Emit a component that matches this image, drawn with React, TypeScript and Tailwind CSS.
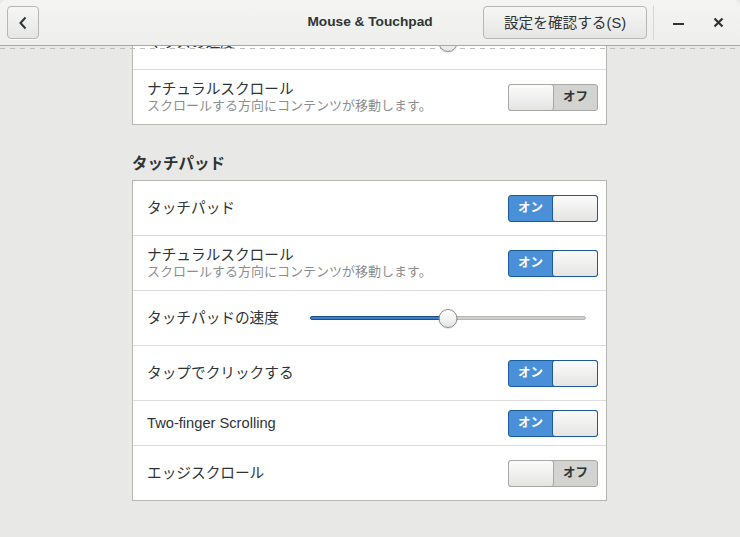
import type { ReactNode } from "react";

const font = "font-['Liberation_Sans','Noto_Sans_CJK_JP',sans-serif]";

function Switch({ on }: { on: boolean }) {
  if (on) {
    return (
      <div className="flex h-[27px] w-[90px] shrink-0 rounded-[3px] border border-[#1d5a99] bg-[#4a90d9]">
        <div className="flex flex-1 items-center justify-center text-[12.5px] font-bold text-white">
          オン
        </div>
        <div className="-my-px -mr-px w-[46px] rounded-[3px] border border-[#1d5a99] bg-gradient-to-b from-[#fbfbfb] to-[#e4e4e3]" />
      </div>
    );
  }
  return (
    <div className="flex h-[27px] w-[90px] shrink-0 rounded-[3px] border border-[#a8a8a5] bg-[#d3d3d1]">
      <div className="-my-px -ml-px w-[46px] rounded-[3px] border border-[#a8a8a5] bg-gradient-to-b from-[#fbfbfb] to-[#e4e4e3]" />
      <div className="flex flex-1 items-center justify-center text-[12.5px] font-bold text-[#2e3436]">
        オフ
      </div>
    </div>
  );
}

function Slider({ value }: { value: number }) {
  return (
    <div className="relative mr-[12px] ml-auto flex h-[20px] w-[276px] items-center">
      <div className="h-[4px] w-full rounded-full border border-[#b5b5b2] bg-[#cfcfcd]" />
      <div
        className="absolute top-[8px] left-0 h-[4px] rounded-full border border-[#1c5187] bg-[#3b7fc8]"
        style={{ width: `${value}%` }}
      />
      <div
        className="absolute top-[0.5px] h-[19px] w-[19px] -translate-x-1/2 rounded-full border border-[#8e8e8b] bg-gradient-to-b from-[#ffffff] to-[#e6e6e4] shadow-[0_1px_1px_rgba(0,0,0,0.12)]"
        style={{ left: `${value}%` }}
      />
    </div>
  );
}

function Row({
  title,
  sub,
  tall = true,
  last = false,
  children,
}: {
  title: string;
  sub?: string;
  tall?: boolean;
  last?: boolean;
  children: ReactNode;
}) {
  // heights include the 1px separator at the bottom
  const h = last ? "h-[54px]" : tall ? "h-[55px] border-b border-[#dcdcda]" : "h-[45px] border-b border-[#dcdcda]";
  return (
    <div className={`flex items-center pr-[8px] pl-[14px] ${h}`}>
      <div className="flex flex-col">
        <span className="text-[14.67px] leading-[18px] text-[#2e3436]">{title}</span>
        {sub && <span className="text-[13px] leading-[16px] text-[#8b8e8f]">{sub}</span>}
      </div>
      <div className="ml-auto flex flex-1 justify-end">{children}</div>
    </div>
  );
}

const naturalSub = "スクロールする方向にコンテンツが移動します。";

export default function App() {
  return (
    <div className={`${font} flex h-[537px] w-[740px] flex-col overflow-hidden bg-[#e8e8e7]`}>
      <header className="grid h-[46px] shrink-0 grid-cols-[1fr_auto_1fr] items-center rounded-t-[6px] border-b border-[#a8a8a5] bg-gradient-to-b from-[#f4f4f3] to-[#eeeeed]">
        <div className="pl-[7px]">
          <button className="flex h-[33px] w-[32px] items-center justify-center rounded-[4px] border border-[#b6b6b3] bg-gradient-to-b from-[#f6f6f6] to-[#e6e6e5] shadow-[0_1px_0_rgba(255,255,255,0.8)]">
            <svg width="10" height="14" viewBox="0 0 10 14" fill="none">
              <path d="M7.5 1.5L2.5 7L7.5 12.5" stroke="#2e3436" strokeWidth="2" />
            </svg>
          </button>
        </div>
        <div className="text-[13.7px] font-bold text-[#2e3436]">Mouse &amp; Touchpad</div>
        <div className="flex items-center justify-end pr-[4px]">
          <button className="flex h-[33px] w-[164px] items-center justify-center rounded-[4px] border border-[#b6b6b3] bg-gradient-to-b from-[#f6f6f6] to-[#e6e6e5] text-[14.67px] text-[#2e3436]">
            設定を確認する(S)
          </button>
          <div className="ml-[6px] h-[34px] w-px bg-[#d6d6d4]" />
          <button className="ml-[6px] flex h-[33px] w-[36px] items-center justify-center">
            <div className="mt-[3px] h-[2px] w-[11px] bg-[#2e3436]" />
          </button>
          <button className="ml-[4px] flex h-[33px] w-[36px] items-center justify-center">
            <svg width="11" height="11" viewBox="0 0 11 11">
              <path d="M1.5 1.5L9.5 9.5M9.5 1.5L1.5 9.5" stroke="#2e3436" strokeWidth="2.2" />
            </svg>
          </button>
        </div>
      </header>

      <main className="relative flex-1 overflow-hidden">
        <div className="pointer-events-none absolute top-[2px] right-0 left-0 h-px bg-[repeating-linear-gradient(90deg,#bdbdba_0_5px,transparent_5px_10px)]" />
        <div className="mt-[-32px] ml-[132px] w-[475px]">
          <div className="border border-[#b6b6b3] bg-white">
            <Row title="マウスの速度">
              <Slider value={50} />
            </Row>
            <Row title="ナチュラルスクロール" sub={naturalSub} last>
              <Switch on={false} />
            </Row>
          </div>

          <h2 className="mt-[29px] mb-[6px] h-[20px] text-[15.5px] leading-[20px] font-bold text-[#2e3436]">
            タッチパッド
          </h2>

          <div className="border border-[#b6b6b3] bg-white">
            <Row title="タッチパッド">
              <Switch on />
            </Row>
            <Row title="ナチュラルスクロール" sub={naturalSub}>
              <Switch on />
            </Row>
            <Row title="タッチパッドの速度">
              <Slider value={50} />
            </Row>
            <Row title="タップでクリックする">
              <Switch on />
            </Row>
            <Row title="Two-finger Scrolling" tall={false}>
              <Switch on />
            </Row>
            <Row title="エッジスクロール" last>
              <Switch on={false} />
            </Row>
          </div>
        </div>
      </main>
    </div>
  );
}
